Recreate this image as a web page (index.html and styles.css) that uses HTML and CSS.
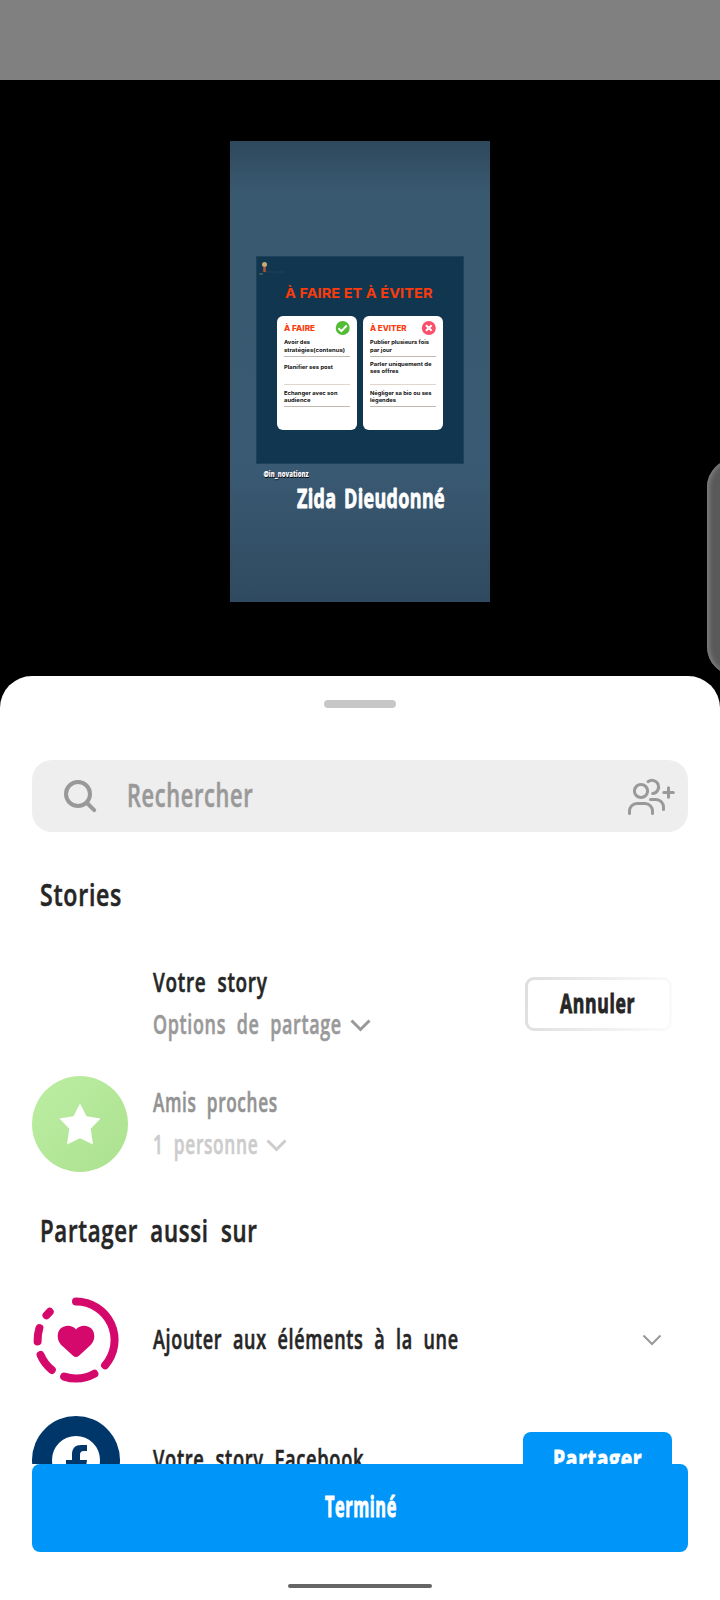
FILE: index.html
```html
<!DOCTYPE html>
<html lang="fr">
<head>
<meta charset="utf-8">
<title>Partager</title>
<link rel="stylesheet" href="styles.css">
</head>
<body>
<div class="screen">
  <div class="statusbar"></div>
  <div class="preview">
    <svg class="story" width="260" height="461" viewBox="230 141 260 461">
      <defs>
        <linearGradient id="shade" x1="0" y1="0" x2="0" y2="1">
          <stop offset="0" stop-color="#2e485c"/>
          <stop offset=".11" stop-color="#395970"/>
          <stop offset=".7" stop-color="#3a5a73"/>
          <stop offset="1" stop-color="#2f4a60"/>
        </linearGradient>
      </defs>
      <rect x="230" y="141" width="260" height="461" fill="url(#shade)"/>
      <rect x="256.500" y="256.500" width="207" height="207" fill="#103650" stroke="#1d435c"/>
      <circle cx="264.500" cy="264.500" r="2.500" fill="#c9ab72"/>
      <path d="M264.500 267v5" stroke="#b5533a" stroke-width="2.500"/>
      <path d="M259 274h4" stroke="#4b6353" stroke-width="1.500"/>
      <text x="266" y="273" class="logo" textLength="18" lengthAdjust="spacingAndGlyphs">innovation</text>
      <text x="285" y="298" class="title" textLength="147.500" lengthAdjust="spacingAndGlyphs">À FAIRE ET À ÉVITER</text>
      <rect x="277" y="316" width="80" height="114" rx="6" fill="#fff"/>
      <rect x="363" y="316" width="80" height="114" rx="6" fill="#fff"/>
      <text x="284" y="331.300" class="head" textLength="31" lengthAdjust="spacingAndGlyphs">À FAIRE</text>
      <text x="370" y="331.300" class="head" textLength="36.500" lengthAdjust="spacingAndGlyphs">À EVITER</text>
      <circle cx="342.700" cy="328" r="7" fill="#54bb35"/>
      <path d="M338.500 328.300l2.900 2.800 5.400-5.600" fill="none" stroke="#fff" stroke-width="2"/>
      <circle cx="428.800" cy="328" r="7" fill="#fb506c"/>
      <path d="M426 325.200l5.600 5.600m0-5.600l-5.600 5.600" stroke="#fff" stroke-width="2"/>
      <g class="body">
        <text x="284" y="344" textLength="26" lengthAdjust="spacingAndGlyphs">Avoir des</text>
        <text x="284" y="351.500" textLength="61" lengthAdjust="spacingAndGlyphs">stratégies(contenus)</text>
        <text x="284" y="369.300" textLength="49" lengthAdjust="spacingAndGlyphs">Planifier ses post</text>
        <text x="284" y="394.500" textLength="53.500" lengthAdjust="spacingAndGlyphs">Echanger avec son</text>
        <text x="284" y="402" textLength="26.500" lengthAdjust="spacingAndGlyphs">audience</text>
        <text x="370" y="344" textLength="59" lengthAdjust="spacingAndGlyphs">Publier plusieurs fois</text>
        <text x="370" y="351.500" textLength="22" lengthAdjust="spacingAndGlyphs">par jour</text>
        <text x="370" y="365.500" textLength="61.500" lengthAdjust="spacingAndGlyphs">Parler uniquement de</text>
        <text x="370" y="373" textLength="28.500" lengthAdjust="spacingAndGlyphs">ses offres</text>
        <text x="370" y="394.500" textLength="61.500" lengthAdjust="spacingAndGlyphs">Négliger sa bio ou ses</text>
        <text x="370" y="402" textLength="26" lengthAdjust="spacingAndGlyphs">légendes</text>
      </g>
      <path d="M284 356.500h66M370 356.500h66M284 406.500h66M370 406.500h66" stroke="#c0b9b0"/>
      <path d="M284 384.500h66M370 384.500h66" stroke="#dfd7cb"/>
      <text x="264" y="477.500" class="handle shadow" textLength="45" lengthAdjust="spacingAndGlyphs">@in_novationz</text>
      <text x="263.500" y="476.500" class="handle" textLength="45" lengthAdjust="spacingAndGlyphs">@in_novationz</text>
      <text x="297" y="507.500" class="author" textLength="148" lengthAdjust="spacingAndGlyphs">Zida Dieudonné</text>
    </svg>
    <div class="edge"></div>
  </div>

  <div class="sheet">
    <div class="grip"></div>
    <div class="search">
      <svg width="34" height="34" viewBox="0 0 34 34" fill="none" stroke="#999" stroke-linecap="round"><circle cx="14" cy="14" r="12" stroke-width="4"/><path d="M23 23l7.200 7.200" stroke-width="4"/></svg>
      <span class="placeholder">Rechercher</span>
      <svg class="people" width="48" height="38" viewBox="627 778 48 38" fill="none" stroke="#999" stroke-width="3" stroke-linecap="round"><circle cx="641" cy="791" r="6.600"/><path d="M629.500 813.500v-2.500a7.500 7.500 0 0 1 7.500-7.500h8a7.500 7.500 0 0 1 7.500 7.500v2.500"/><path d="M648 781.700a6.600 6.600 0 1 1 4.700 11.800"/><path d="M650.500 799.500h5.500a7.500 7.500 0 0 1 7.500 7.500v2.500M663.800 792.500h9.500M668.500 787.800v9.500"/></svg>
    </div>
    <h2 class="heading first"><span class="t-stories">Stories</span></h2>
    <div class="list">
      <div class="row">
        <div class="icon"></div>
        <div class="labels">
          <div class="line"><span class="t-votre">Votre story</span></div>
          <div class="line sub"><span class="t-options">Options de partage</span><svg class="chev" width="21" height="14" viewBox="0 0 21 14"><path d="M1.500 1.500l9 9 9-9"/></svg></div>
        </div>
        <div class="btn outline"><span class="t-annuler">Annuler</span></div>
      </div>
      <div class="row faded">
        <div class="icon">
          <svg width="96" height="96" viewBox="0 0 96 96"><defs><linearGradient id="green" x1="0" y1="0" x2="1" y2="1"><stop stop-color="#bdeea3"/><stop offset="1" stop-color="#abe18f"/></linearGradient></defs><circle cx="48" cy="48" r="48" fill="url(#green)"/><path d="M48 27.500l6.500 12.800 14 2.200-9.800 10.200 2.300 15.800L48 62.300 35 68.500l2.300-15.800L27.500 42.500l14-2.200z" fill="#fff"/></svg>
        </div>
        <div class="labels">
          <div class="line"><span class="t-amis">Amis proches</span></div>
          <div class="line sub"><span class="t-personne">1 personne</span><svg class="chev" width="21" height="14" viewBox="0 0 21 14"><path d="M1.500 1.500l9 9 9-9"/></svg></div>
        </div>
      </div>
      <h2 class="heading"><span class="t-aussi">Partager aussi sur</span></h2>
      <div class="row">
        <div class="icon">
          <svg width="88" height="88" viewBox="-44 -44 88 88"><g fill="none" stroke="#d5086c" stroke-width="8" stroke-linecap="round"><path d="M0-38.500A38.500 38.500 0 0 1 29.100 25.300"/><path d="M18.400 33.800A38.500 38.500 0 0 1-11.900 36.600"/><path d="M-24.200 29.900A38.500 38.500 0 0 1-35.400 15"/><path d="M-38.400 1.500A38.500 38.500 0 0 1-36.600-11.900"/><path d="M-29.500-24.700A38.500 38.500 0 0 1-26.300-28.200"/></g><path d="M0-10.500c5-6.500 18.300-4.500 18.300 6.500 0 5-2.500 8-5 10.300L3 15.700q-3 2.400-6 0L-13.300 6.300c-2.500-2.300-5-5.300-5-10.300C-18.300-15-5-17 0-10.500z" fill="#d5086c"/></svg>
        </div>
        <div class="labels"><div class="line"><span class="t-ajouter">Ajouter aux éléments à la une</span></div></div>
        <svg class="more" width="20" height="12" viewBox="0 0 20 12"><path d="M1.500 1.500l8.500 8.500 8.500-8.500"/></svg>
      </div>
      <div class="row">
        <div class="icon">
          <svg width="88" height="88" viewBox="-44 -44 88 88"><circle r="44" fill="#00376b"/><circle r="24" fill="#fff"/><path d="M-4 24V7h-6V0h6v-5.500c0-6.500 3.500-9.500 9-9.500h6v6H8c-3 0-4 1.500-4 4V0h7l-1 7H4v17z" fill="#00376b"/></svg>
        </div>
        <div class="labels"><div class="line"><span class="t-facebook">Votre story Facebook</span></div></div>
        <div class="btn solid"><span class="t-partager">Partager</span></div>
      </div>
    </div>
    <div class="footer">
      <div class="done"><span class="t-termine">Terminé</span></div>
      <div class="navbar"></div>
    </div>
  </div>
</div>
</body>
</html>
```
FILE: styles.css
```css
* { box-sizing: border-box; }
body { margin: 0; font-family: "Open Sans", "Noto Sans", sans-serif; color: #262626; background: #000; }
.screen { width: 720px; height: 1600px; display: flex; flex-direction: column; overflow: hidden; }
.statusbar { height: 80px; flex: none; background: #808080; }
.preview { position: relative; height: 596px; flex: none; display: flex; justify-content: center; padding-top: 61px; }
.story { display: block; }
.title, .head { font-family: Inter, sans-serif; font-weight: 700; fill: #fb3b0b; }
.title { font-size: 13.500px; }
.head { font-size: 8px; font-weight: 800; }
.body { font-family: Inter, sans-serif; font-weight: 700; font-size: 5.400px; fill: #111; }
.logo { font-size: 4px; fill: #304858; }
.handle { font-size: 8px; font-weight: 800; fill: #fff; }
.shadow { fill: #000; }
.author { font-size: 27px; font-weight: 700; fill: #fff; stroke: #fff; stroke-width: .9px; stroke-linejoin: round; letter-spacing: .5px; word-spacing: 4px; }
.edge { position: absolute; left: 707px; top: 379px; width: 56px; height: 216px; border-radius: 28px; background: #595959; box-shadow: inset 2px 0 5px #858585; }

.sheet { height: 924px; flex: none; background: #fff; border-radius: 32px 32px 0 0; display: flex; flex-direction: column; }
.grip { width: 72px; height: 8px; margin: 24px auto 52px; border-radius: 4px; background: #c7c7c7; flex: none; }
.search { height: 72px; flex: none; margin: 0 32px; padding: 2px 13px 0 32px; border-radius: 20px; background: #eee; display: flex; align-items: center; color: #999; }
.placeholder { margin: 0 0 4px 29px; font-size: 33px; font-weight: 600; line-height: 66px; }
.people { margin-left: auto; }
.heading { margin: 0; height: 96px; padding: 0 0 4px 40px; font-size: 31px; font-weight: 600; display: flex; align-items: center; }
.heading.first { height: 112px; flex: none; padding: 12px 0 0 40px; }
.list { height: 520px; flex: none; overflow: hidden; }
.row { height: 120px; padding: 0 48px 0 32px; display: flex; align-items: center; }
.icon { width: 96px; flex: none; margin-right: 25px; }
.icon svg { display: block; }
.labels { flex: 1; padding-bottom: 3px; min-width: 0; }
.line { height: 42px; line-height: 42px; display: flex; align-items: center; font-size: 27px; font-weight: 600; }
.sub { color: #999; }
.faded .line { color: #939393; }
.faded .sub { color: #ccc; }
.chev { margin-left: 8px; margin-top: 4px; flex: none; }
.chev path, .more path { fill: none; stroke: currentColor; stroke-width: 3; }
.more { color: #999; margin-right: 10px; }
.more path { stroke-width: 2; }

.btn { height: 54px; display: flex; align-items: center; justify-content: center; padding-bottom: 4px; font-size: 27px; font-weight: 700; flex: none; }
.outline { width: 147px; border-radius: 9px; border: 3px solid transparent; background: linear-gradient(#fff, #fff) padding-box, linear-gradient(100deg, #dedede, #f0f0f0 60%, #fbfbfb) border-box; }
.solid { width: 149px; height: 56px; border-radius: 8px; background: #0095f9; color: #fff; }
.footer { flex: 1; padding: 0 32px; }
.done { height: 88px; padding-bottom: 4px; border-radius: 8px; background: #0095f9; color: #fff; font-size: 28px; font-weight: 700; display: flex; align-items: center; justify-content: center; }
.navbar { width: 144px; height: 4px; border-radius: 2px; margin: 32px auto 0; background: #666; }

/* Narrow lettering: each label keeps a fixed box and is condensed from the left edge. */
span { display: block; white-space: nowrap; letter-spacing: 1px; word-spacing: 8px; transform-origin: 0 50%; -webkit-text-stroke: .6px currentColor; }
.btn span, .done span { -webkit-text-stroke-width: 1px; }
.placeholder { width: 126px; transform: scaleX(.66); }
.t-stories { width: 81px; transform: scaleX(.745); }
.t-votre { width: 115px; transform: scaleX(.7); }
.t-options { width: 189px; transform: scaleX(.664); }
.t-annuler { width: 77px; transform: scaleX(.652); }
.t-amis { width: 125px; transform: scaleX(.638); }
.t-personne { width: 105px; transform: scaleX(.642); }
.t-aussi { width: 217px; transform: scaleX(.716); }
.t-ajouter { width: 306px; transform: scaleX(.667); }
.t-facebook { width: 211px; transform: scaleX(.677); }
.t-partager { width: 89px; transform: scaleX(.714); }
.t-termine { width: 71px; transform: scaleX(.582); }
```
